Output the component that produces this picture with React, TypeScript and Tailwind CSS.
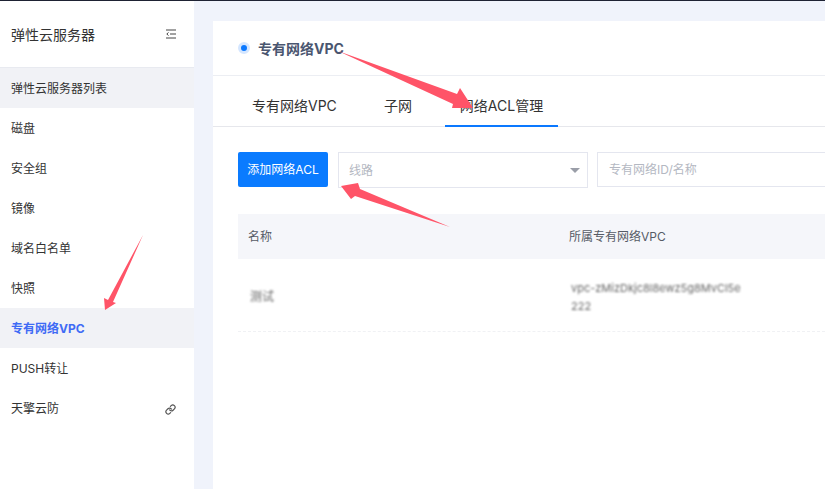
import React from "react";
import { Link } from "lucide-react";

const items = ["弹性云服务器列表", "磁盘", "安全组", "镜像", "域名白名单", "快照", "专有网络VPC", "PUSH转让", "天擎云防"];

export default function App() {
  return (
    <div className="relative w-[825px] h-[489px] overflow-hidden bg-[#f0f3fb] flex flex-col font-['Inter','Noto_Sans_CJK_SC',sans-serif] text-[#333]">
      <div className="h-px bg-[#1e2233] shrink-0" />
      <div className="flex flex-1 min-h-0">
        <aside className="w-[194px] shrink-0 bg-white flex flex-col">
          <div className="h-[67px] shrink-0 flex items-center justify-between pl-[11px] pr-[18px] border-b border-[#e8eaf0]">
            <span className="text-[14px] text-[#333]">弹性云服务器</span>
            <svg width="10" height="10" viewBox="0 0 10 10" fill="none" stroke="#444" strokeWidth="1">
              <path d="M0 1h10M4 5h6M0 9h10" />
              <path d="M2.5 3.5 0.8 5l1.7 1.5" />
            </svg>
          </div>
          {items.map((t, i) => (
            <div
              key={t}
              className={`h-10 shrink-0 flex items-center justify-between pl-[11px] pr-[18px] pt-[2px] text-[12px] ${
                i === 0 ? "bg-[#f1f2f6]" : i === 6 ? "bg-[#f1f2f6] text-[#3f6bf5] font-bold" : ""
              }`}
            >
              <span>{t}</span>
              {i === 8 && <Link size={11} strokeWidth={2.6} className="text-[#555]" />}
            </div>
          ))}
        </aside>
        <main className="flex-1 min-w-0 pl-[19px] pt-5">
          <div className="h-full bg-white flex flex-col">
            <div className="h-[55px] shrink-0 flex items-center pl-[25px] gap-[8px] border-b border-[#eceef3]">
              <span className="w-3 h-3 rounded-full bg-[#0a78ff] border-[3px] border-[#d4e6ff]" />
              <span className="text-[14px] font-bold text-[#4a5670]">专有网络VPC</span>
            </div>
            <div className="h-[51px] shrink-0 flex border-b border-[#e6e7ec] pl-[39px] text-[14px]">
              <div className="w-[132px] pt-[19px]">专有网络VPC</div>
              <div className="w-[61px] pt-[19px]">子网</div>
              <div className="w-[113px] -mb-px pt-[19px] text-center border-b-2 border-[#0a78ff]">网络ACL管理</div>
            </div>
            <div className="flex items-start pl-[25px] pt-[25px] text-[12px]">
              <button className="w-[90px] h-[35px] bg-[#0a7bff] text-white rounded-[2px]">添加网络ACL</button>
              <div className="ml-[10px] w-[250px] h-9 border border-[#e4e6ef] flex items-center justify-between pl-[10px] pr-[7px] text-[#b4b8c2]">
                <span className="pt-[2px]">线路</span>
                <span className="w-0 h-0 border-x-[5px] border-x-transparent border-t-[5px] border-t-[#9a9ea8]" />
              </div>
              <div className="ml-[9px] flex-1 h-[35px] border border-[#e4e6ef] border-r-0 flex items-center pl-[11px] text-[#b4b8c2]">专有网络ID/名称</div>
            </div>
            <div className="ml-[25px] mt-[26px]">
              <div className="h-[45px] bg-[#f5f6fa] flex items-center text-[12px] text-[#555b66]">
                <div className="w-[331px] pl-[10px]">名称</div>
                <div>所属专有网络VPC</div>
              </div>
              <div className="h-[73px] pt-1 flex items-center border-b border-dashed border-[#f0f1f4] text-[12px] text-[#666]">
                <div className="w-[333px] pl-[12px] blur-[0.9px]">测试</div>
                <div className="w-[180px] leading-[18px] text-[11px] blur-[0.9px] whitespace-nowrap">vpc-zMizDkjc8l8ewz5g8MvCl5e<br />222</div>
              </div>
            </div>
          </div>
        </main>
      </div>
      <svg className="absolute inset-0 pointer-events-none" width="825" height="489" fill="#ff5468">
        <polygon points="338,51 457,94 460,88 473,108 452,108 453,104" />
        <polygon points="450,227 360,189 358,183 341,186 351,199 355,196" />
        <polygon points="143,235 113,302 116,303 105,310 104,298 108,300" />
      </svg>
    </div>
  );
}
